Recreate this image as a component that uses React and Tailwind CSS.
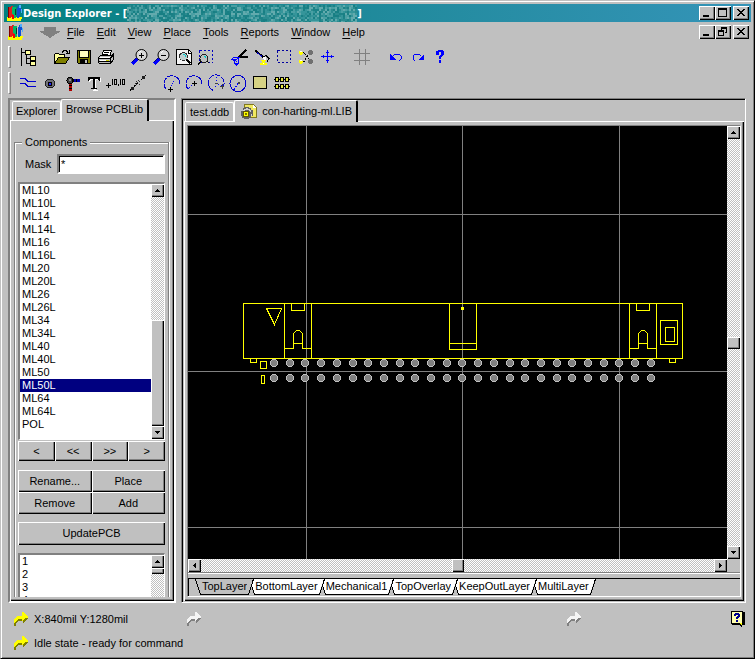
import { useState } from 'react';

const COMPONENTS = ['ML10', 'ML10L', 'ML14', 'ML14L', 'ML16', 'ML16L', 'ML20', 'ML20L', 'ML26', 'ML26L', 'ML34', 'ML34L', 'ML40', 'ML40L', 'ML50', 'ML50L', 'ML64', 'ML64L', 'POL'];
const LAYERS = ['TopLayer', 'BottomLayer', 'Mechanical1', 'TopOverlay', 'KeepOutLayer', 'MultiLayer'];
const MENUS = ['File', 'Edit', 'View', 'Place', 'Tools', 'Reports', 'Window', 'Help'];

const raised = 'bg-[#c0c0c0] shadow-[inset_1px_1px_#fff,inset_-1px_-1px_#000,inset_-2px_-2px_#808080]';
const track = 'bg-[repeating-conic-gradient(#fff_0_25%,#c0c0c0_0_50%)] bg-[length:2px_2px]';

function Svg({ w = 18, h = 18, className = '', children }) {
  return (
    <svg width={w} height={h} viewBox={`0 0 ${w} ${h}`} className={`shrink-0 ${className}`} fill="none" stroke="none" shapeRendering="crispEdges" aria-hidden="true">
      {children}
    </svg>
  );
}

function Lens({ children }) {
  return (
    <Svg>
      <path d="M1 16l5-5" stroke="#00f" strokeWidth="3" />
      <path d="M1 14l4-4" stroke="#000080" />
      <circle cx="10.5" cy="7" r="5.5" fill="#d8d8d8" stroke="#000" shapeRendering="auto" />
      <path d="M7.5 5.5l2-2" stroke="#fff" />
      {children}
    </Svg>
  );
}

const icons = {
  tree: (
    <Svg>
      <path d="M2.5 0v18M2 4.5h4M7.5 7v9M7 10.5h4M7 15.5h4" stroke="#000" />
      <path d="M6.5 2.5h5v4h-5zM11.5 8.5h5v4h-5zM11.5 13.5h5v4h-5z" fill="#ffff9c" stroke="#000" />
    </Svg>
  ),
  open: (
    <Svg>
      <path d="M1.5 15.5v-9l1-1h3l1 1h5v3h-5z" fill="#ffff9c" stroke="#000" />
      <path d="M1.5 15.5l4-6h11l-4 6z" fill="#808000" stroke="#000" />
      <path d="M9 4.5l2-2h2l2 2M16.5 2v4M13 5.5h3" stroke="#000" />
    </Svg>
  ),
  save: (
    <Svg>
      <path d="M2.5 2.5h13v13h-12l-1-1z" fill="#808000" stroke="#000" />
      <path d="M5 3h8v6H5z" fill="#ffffbd" />
      <path d="M4.5 3v6.5h9V3" stroke="#000" />
      <path d="M5 11h8v5H5z" fill="#000" />
      <path d="M10 12h2v3h-2z" fill="#c0c0c0" />
    </Svg>
  ),
  print: (
    <Svg>
      <path d="M4.5 8.5l2-6h8l-2 6z" fill="#fff" stroke="#000" />
      <path d="M7 4.5h5M6 6.5h5" stroke="#000" />
      <path d="M1.5 9.5l2-2h11l2-2v6l-3 4h-11l-1-1z" fill="#c0c0c0" stroke="#000" />
      <path d="M2 10.5h11l3-3M2 13.5h11M13.5 10v5" stroke="#000" />
      <path d="M3 9h10v1H3zM3 12h9v1H3z" fill="#fff" />
      <path d="M9 12h3v1H9z" fill="#cc0" />
    </Svg>
  ),
  zoomIn: <Lens><path d="M8 7.5h5M10.5 5v5" stroke="#000" /></Lens>,
  zoomOut: <Lens><path d="M8 7.5h5" stroke="#000" /></Lens>,
  zoomFit: (
    <Svg>
      <path d="M1.5 1.5h12l3 3v12h-15z" fill="#f4f4f4" stroke="#000" />
      <path d="M13.5 2v3h3" stroke="#000" />
      <circle cx="8.5" cy="8.500" r="4" fill="#c0d0d0" stroke="#303030" />
      <path d="M8 6h2v1h1v2h-1V7H8z" fill="#0cc" />
      <path d="M11.500 11.500l4 4" stroke="#000" strokeWidth="2" />
    </Svg>
  ),
  zoomArea: (
    <Svg>
      <path d="M2.500 2.500h13v12h-13z" stroke="#0000c0" strokeDasharray="2 2" />
      <circle cx="7" cy="10.500" r="4" fill="#c0c0c0" stroke="#202020" />
      <path d="M7 8h2v2H8V9H7z" fill="#0cc" />
      <path d="M1 16.500l3-3M10 13l2 2" stroke="#000" />
    </Svg>
  ),
  cut: (
    <Svg>
      <path d="M15.500 1.500L8 8.500M7 8.500h10" stroke="#000" strokeWidth="2" />
      <path d="M8 9.500H2.500l-2 2h4l3-1zM7.500 10l-4 3v2l2 2 2-2z" stroke="#00f" />
      <path d="M2.500 12v2M5.500 11v5" stroke="#00f" strokeDasharray="1 1" />
    </Svg>
  ),
  paste: (
    <Svg>
      <path d="M2.500 2.500l8 7" stroke="#000" strokeWidth="2" />
      <path d="M4 4.500l5 4" stroke="#0000c0" />
      <path d="M11 8.500l2-1 3 3-2 3" stroke="#000" />
      <path d="M8 12h5v1h-1v2h2v2H7v-2h2v-2H8z" fill="#ff0" />
      <path d="M10 9h3v3h-2v-1h-1zM10 15h1v1h-1z" fill="#fff" />
    </Svg>
  ),
  select: <Svg><path d="M2.500 2.500h13v12h-13z" stroke="#0000a0" strokeDasharray="2 2" /></Svg>,
  nodes: (
    <Svg>
      <path d="M5 4.500h2l3 4-3 5H5M13 5l-3 3.500 3 4" stroke="#000" strokeDasharray="2 1" />
      <path d="M2 3h3v1h1v2H5v1H3V6H2zM2 12h3v1h1v2H5v1H3v-1H2z" fill="#ff0" />
      <path d="M3 3h2v1H3zM3 12h2v1H3z" fill="#fff" />
      <path d="M12 2h3v1h1v3h-1v1h-3V6h-1V3h1zM12 11h3v1h1v3h-1v1h-3v-1h-1v-3h1z" fill="#707070" />
    </Svg>
  ),
  move: (
    <Svg>
      <path d="M2 8.500h13M8.500 2v13M4.500 7v3M12.500 7v3M7 4.500h3M7 12.500h3" stroke="#00f" />
    </Svg>
  ),
  grid: <Svg><path d="M1 5.500h16M1 12.500h16M6.500 1v16M12.500 1v16" stroke="#808080" /></Svg>,
  undo: (
    <Svg>
      <path d="M6 8l2-2h4l2 2v3l-2 2" stroke="#00f" />
      <path d="M3 6v6h6z" fill="#00f" />
    </Svg>
  ),
  redo: (
    <Svg>
      <path d="M12 8l-2-2H6L4 8v3l2 2" stroke="#00f" />
      <path d="M15 6v6H9z" fill="#00f" />
    </Svg>
  ),
  help: (
    <Svg>
      <path d="M5 3h2V2h5v1h1v4h-1v1h-1v1h-1v2H8V8h1V7h1V4H8v3H5zM8 12h2v3H8z" fill="#00f" />
    </Svg>
  ),
  track: <Svg><path d="M1 4.500h5l3 3h8M1 9.500h5l3 3h8" stroke="#0000d0" /></Svg>,
  via: (
    <Svg>
      <circle cx="9" cy="9.500" r="4.500" fill="#707078" stroke="#202020" />
      <path d="M7 8h4v4H7z" fill="#000" />
      <path d="M8 9h2v2H8z" fill="#22f" />
    </Svg>
  ),
  pad: (
    <Svg>
      <path d="M8 5h9v3H8z" fill="#0000b0" />
      <path d="M6 8h3v9H6z" fill="#b00000" />
      <path d="M10.500 5v3M13.500 5v3" stroke="#000" />
      <path d="M6 11.500h3M6 14.500h3" stroke="#000" />
      <circle cx="7" cy="6.500" r="3" fill="#404040" stroke="#000" />
      <path d="M6 5h2v2H6z" fill="#909090" />
    </Svg>
  ),
  text: (
    <Svg>
      <path d="M4 4h12v4h-1l-1-2h-3v10h2v1H8v-1h1V6H6L5 8H4z" fill="#fff" />
      <path d="M3 3h12v4h-1l-1-2h-3v9h2v1H6v-1h2V5H5L4 7H3z" fill="#000" />
    </Svg>
  ),
  coord: (
    <Svg w={20}>
      <path d="M0 11.500h5M2.500 9v5" stroke="#000" />
      <path d="M6.500 5v6M14.500 5v6M12.500 10v2" stroke="#000" />
      <path d="M8.500 5.500h2v5h-2zM16.500 5.500h2v5h-2z" stroke="#000" />
    </Svg>
  ),
  dimension: (
    <Svg>
      <path d="M1 16.500L17 1" stroke="#000" strokeDasharray="2 1" />
      <path d="M13 2h3v3h-3zM2 13h3v3H2z" fill="#202020" />
      <path d="M7 7l4 4M9 6l3 3M6 9l3 3" stroke="#303030" strokeDasharray="1 1" />
    </Svg>
  ),
  arcCenter: (
    <Svg>
      <path d="M3.500 15.500A8 8 0 1 1 17 10" stroke="#0000d0" strokeDasharray="6 1" />
      <path d="M4.500 15.500h5M7.500 13v5" stroke="#000" />
      <path d="M8.500 12l2-5" stroke="#00f" strokeDasharray="1 1" />
    </Svg>
  ),
  arcEdge: (
    <Svg>
      <path d="M3.500 15.500A8 8 0 1 1 17 10" stroke="#0000d0" strokeDasharray="6 1" />
      <path d="M7 9.500h5M9.500 7v5" stroke="#000" />
      <path d="M3 15l4-4" stroke="#00f" strokeDasharray="1 1" />
    </Svg>
  ),
  arcAngle: (
    <Svg>
      <path d="M6.500 16.500A8 8 0 1 1 16 13" stroke="#0000d0" strokeDasharray="6 1" />
      <path d="M9.500 3v7l-3 6M11 10l4 2" stroke="#00f" strokeDasharray="1 2" />
      <path d="M8 9.500h3M13 12.500h4M15.500 10v5" stroke="#404040" />
    </Svg>
  ),
  circle: (
    <Svg>
      <circle cx="9" cy="9.500" r="8" stroke="#0000d0" />
      <path d="M9 9l-4 7" stroke="#00f" strokeDasharray="2 1" />
      <path d="M9 8h2v2H9z" fill="#404040" />
    </Svg>
  ),
  fill: (
    <Svg>
      <path d="M2.500 2.500h13v12h-13z" fill="#d6d284" stroke="#000" />
    </Svg>
  ),
  array: (
    <Svg>
      {[2, 7, 12].map(x => [3, 10].map(y => (
        <path key={`${x}-${y}`} d={`M${x + 0.5} ${y + 0.5}h3v4h-3z`} fill="#e8e840" stroke="#000" />
      )))}
      <path d="M1 5.500h16M1 12.500h16" stroke="#000" strokeDasharray="1 4" />
    </Svg>
  ),
};

const TOOLBARS = [
  [['tree'], ['open', 'save', 'print'], ['zoomIn', 'zoomOut', 'zoomFit', 'zoomArea'], ['cut', 'paste', 'select', 'nodes', 'move'], ['grid'], ['undo', 'redo', 'help']],
  [['track', 'via', 'pad', 'text', 'coord', 'dimension'], ['arcCenter', 'arcEdge', 'arcAngle', 'circle', 'fill', 'array']],
];

function AppIcon() {
  return (
    <Svg w={16} h={16}>
      <path d="M0 12h15l-1 4H0z" fill="#ff0" />
      <path d="M1 2l5-1v11l-5 1z" fill="#e02020" />
      <path d="M1.500 2v11" stroke="#800000" />
      <path d="M5 2h4v11H6V9H5z" fill="#00b868" />
      <path d="M8.500 4v6" stroke="#003c30" />
      <path d="M10 3h1V1h3v5h-1v6l-3 1z" fill="#1050d0" />
      <path d="M12 0h2v3h-2zM14 4h1v4h-1z" fill="#50b0ff" />
      <path d="M5 10h2v4H5z" fill="#f80000" />
    </Svg>
  );
}

function HintArrow({ on }) {
  return (
    <Svg w={15} h={14}>
      <path d="M0 14v-4l3-3h5V4l6 2-5 5V9H4l-2 2v3z" fill={on ? '#808000' : '#808080'} />
      <path d="M0 11V8l3-4h5V0h1l5 5v1h-3L8 9V7H4l-3 3z" fill={on ? '#ff0' : '#f4f4f4'} />
    </Svg>
  );
}

function Noise() {
  const shades = ['#1c8287', '#35959a', '#4a9fa3', '#2b8b90', '#62aaad', '#187f84'];
  const cells = [];
  for (let y = 0; y < 9; y++) {
    for (let x = 0; x < 115; x++) {
      const n = Math.abs(Math.floor(Math.sin(x * 12.9898 + y * 78.233) * 43758.5453)) % 6;
      cells.push(<rect key={`${x}-${y}`} x={x * 2} y={y * 2} width="2" height="2" fill={shades[n]} />);
    }
  }
  return <Svg w={230} h={17}>{cells}</Svg>;
}

function WinButtons({ restore }) {
  const btn = `flex h-[14px] w-4 items-center justify-center ${raised}`;
  return (
    <div className="ml-auto flex">
      <button className={btn} aria-label="Minimize"><Svg w={12} h={10}><path d="M2 7h6v2H2z" fill="#000" /></Svg></button>
      <button className={btn} aria-label={restore ? 'Restore' : 'Maximize'}>
        <Svg w={12} h={10}>
          {restore
            ? <path d="M4.500 3V.500h5v5H8M4 1.500h6M1.500 3.500h5v5h-5zM1 4.500h6" stroke="#000" />
            : <path d="M1.500 .500h8v8h-8zM1 1.500h9" stroke="#000" />}
        </Svg>
      </button>
      <button className={`ml-0.5 ${btn}`} aria-label="Close">
        <Svg w={12} h={10}><path d="M2 1h2v1h1v1h2V2h1V1h2v1H9v1H8v1H7v1h1v1h1v1h1v1H8V7H7V6H5v1H4v1H2V7h1V6h1V5h1V4H4V3H3V2H2z" fill="#000" /></Svg>
      </button>
    </div>
  );
}

const arrows = { up: 'M5 4h1v1h1v1h1v1H3V6h1V5h1z', down: 'M3 4h5v1H7v1H6v1H5V6H4V5H3z', left: 'M4 5h1V4h1V3h1v5H6V7H5V6H4z', right: 'M4 3h1v1h1v1h1v1H6v1H5v1H4z' };

function ScrollButton({ dir }) {
  return (
    <button className={`flex size-[13px] shrink-0 items-center justify-center ${raised}`} aria-label={`Scroll ${dir}`}>
      <Svg w={11} h={11}><path d={arrows[dir]} fill="#000" /></Svg>
    </button>
  );
}

function PushButton({ className = '', children }) {
  return <button className={`flex items-center justify-center ${raised} ${className}`}>{children}</button>;
}

function Tab({ active, className = '', children }) {
  return (
    <button className={`relative flex items-center rounded-t-[2px] border-t border-l border-white whitespace-nowrap ${active ? 'z-10 -mb-px h-[22px] border-r-2 border-r-black bg-[#c0c0c0]' : 'h-[19px] border-r border-r-white'} ${className}`}>
      {children}
    </button>
  );
}

// slanted edge between two layer tabs
function Slant({ left, right }) {
  return (
    <Svg w={8} h={16}>
      {left && <path d="M0 0h6L1 15H0z" fill={left} />}
      {right && <path d="M8 0H6L5 6l2 9h1z" fill={right} />}
      {left && <path d="M0 15.500h1.500L6.500 0" stroke="#000" />}
      {right && <path d={left ? 'M4.500 6l3 9.500H8' : 'M1.500 0l5 15.500H8'} stroke="#000" />}
    </Svg>
  );
}

function Latch({ x }) {
  return <path d={`M${x} 177v55M${x + 27} 177v55M${x + 7} 177v7h13v-7M${x} 222h9v-15l3-3h3l3 3v15h9M${x + 9} 217h9`} />;
}

function Footprint() {
  const pads = Array.from({ length: 25 }, (_, i) => 86 + Math.round(i * 15.7));
  return (
    <svg className="absolute inset-0 h-full w-full" shapeRendering="crispEdges" aria-label="ML50L footprint">
      <path d="M118.500 0v1000M274.500 0v1000M431.500 0v1000M0 88.500h2000M0 245.500h2000M0 401.500h2000" stroke="#808080" />
      {pads.map(x => [237, 252].map(y => (
        <g key={`${x}-${y}`}>
          <circle cx={x} cy={y} r="4" fill="#c0c0c0" />
          <circle cx={x} cy={y} r="3" fill="#808080" />
        </g>
      )))}
      <g transform="translate(.5 .5)" fill="none" stroke="#ff0">
        <path d="M55 177h439v55H55z" />
        <path d="M78 182h15l-7 16z" />
        <path d="M261 177v46h27v-46M261 217h27" />
        <path d="M472 194h17v24h-17zM477 201h9v14h-9z" />
        <path d="M62 232v4h6v-4M481 232v4h6v-4M72 235h6v7h-6zM73 249h3v8h-3z" />
        <Latch x={96} />
        <Latch x={441} />
      </g>
      <path d="M273 181h3v3h-3z" fill="#ff0" />
    </svg>
  );
}

export default function App() {
  const [selected, setSelected] = useState('ML50L');
  const [mask, setMask] = useState('*');
  const [layer, setLayer] = useState('TopLayer');

  return (
    <div className="flex h-screen flex-col overflow-hidden border border-t-[#c0c0c0] border-r-black border-b-black border-l-[#c0c0c0] bg-[#c0c0c0] p-[3px] font-['Liberation_Sans',Arial,sans-serif] text-[11px] leading-[13px] text-black shadow-[inset_1px_1px_#fff,inset_-1px_-1px_#808080]">
      <header className="flex h-[18px] shrink-0 items-center bg-linear-to-r from-[#008080] to-[#3494b8] pr-0.5 pl-[3px] text-white">
        <AppIcon />
        <h1 className="font-['DejaVu_Sans_Condensed','DejaVu_Sans',sans-serif] text-[11px] font-bold whitespace-nowrap">Design Explorer - [</h1>
        <Noise />
        <span className="font-['DejaVu_Sans_Condensed','DejaVu_Sans',sans-serif] font-bold">]</span>
        <WinButtons />
      </header>

      <nav className="flex h-5 shrink-0 items-center pr-0.5 pl-1">
        <AppIcon />
        <Svg w={22} h={11} className="ml-[15px]"><path d="M5 0h12v4h5L11 11 0 4h5z" fill="#808080" /></Svg>
        {MENUS.map(m => (
          <button key={m} className="px-1.5"><span className="underline underline-offset-2">{m[0]}</span>{m.slice(1)}</button>
        ))}
        <WinButtons restore />
      </nav>

      <div className="shrink-0 py-0.5">
        {TOOLBARS.map((groups, i) => (
          <div key={i} className="flex h-[26px] items-center gap-3 pl-1">
            {groups.map((group, j) => (
              <div key={j} className="flex items-center">
                {j === 0 && <span className="mr-1.5 h-[22px] w-[3px] border border-t-white border-r-[#808080] border-b-[#808080] border-l-white" />}
                {group.map(name => (
                  <button key={name} className="flex h-6 w-[22px] items-center justify-center" aria-label={name}>{icons[name]}</button>
                ))}
              </div>
            ))}
          </div>
        ))}
      </div>

      <main className="flex min-h-0 flex-1 gap-[5px] pr-[5px] pl-1">
        <section className="flex w-[168px] shrink-0 flex-col border-2 border-t-[#808080] border-r-white border-b-white border-l-[#808080]">
          <div className="flex h-5 shrink-0 items-end pl-0.5">
            <Tab className="px-[3px]">Explorer</Tab>
            <Tab active className="px-1 pb-0.5">Browse PCBLib</Tab>
          </div>
          <div className="flex min-h-0 flex-1 flex-col border-t border-l border-white px-[3px] pt-[15px] pb-1 shadow-[inset_-1px_-1px_#000,inset_-2px_-2px_#808080]">
            <fieldset className="mr-0.5 min-h-0 min-w-0 flex-1 overflow-hidden border border-b-0 border-[#808080] px-[3px] shadow-[inset_1px_1px_#fff,1px_0_#fff]">
              <legend className="ml-1 bg-[#c0c0c0] px-[3px]">Components</legend>
              <div className="mt-[5px] flex h-5 items-center justify-between pl-[7px]">
                <label htmlFor="mask">Mask</label>
                <input id="mask" value={mask} onChange={e => setMask(e.target.value)} className="h-5 w-[108px] border-2 border-t-[#808080] border-r-white border-b-white border-l-[#808080] bg-white px-0.5 shadow-[inset_1px_1px_#000] outline-none" />
              </div>
              <div className="mt-2 flex h-[258px] border-t-2 border-r border-b border-l-2 border-t-[#808080] border-r-white border-b-white border-l-[#808080] bg-white">
                <ul role="listbox" aria-label="Components" className="flex-1">
                  {COMPONENTS.map(c => (
                    <li key={c} role="option" aria-selected={c === selected} onClick={() => setSelected(c)} className={`pl-0.5 ${c === selected ? 'bg-[#000080] text-white' : ''}`}>{c}</li>
                  ))}
                </ul>
                <div className={`flex w-[13px] flex-col ${track}`}>
                  <ScrollButton dir="up" />
                  <div className={`mt-auto h-[106px] ${raised}`} />
                  <ScrollButton dir="down" />
                </div>
              </div>
              <div className="mt-px grid h-5 grid-cols-4">
                {['<', '<<', '>>', '>'].map(t => <PushButton key={t}>{t}</PushButton>)}
              </div>
              <div className="mt-[9px] grid grid-cols-2">
                {['Rename...', 'Place', 'Remove', 'Add'].map(t => <PushButton key={t} className="h-[22px]">{t}</PushButton>)}
              </div>
              <PushButton className="mt-2 h-[23px] w-full">UpdatePCB</PushButton>
              <div className="mt-2 flex h-[60px] border-t-2 border-r border-l-2 border-t-[#808080] border-r-white border-l-[#808080] bg-white">
                <ul role="listbox" aria-label="Pads" className="flex-1">
                  {[1, 2, 3, 4].map(n => <li key={n} role="option" aria-selected="false" className="pl-0.5">{n}</li>)}
                </ul>
                <div className={`w-[13px] ${track}`}>
                  <ScrollButton dir="up" />
                  <div className={`h-1.5 ${raised}`} />
                </div>
              </div>
            </fieldset>
          </div>
        </section>

        <section className="flex min-w-0 flex-1 flex-col border border-t-[#808080] border-r-white border-b-white border-l-[#808080] pt-px pr-px pb-px pl-0.5 shadow-[inset_1px_1px_#000]">
          <div className="flex h-[21px] shrink-0 items-end pl-px">
            <Tab className="px-1">test.ddb</Tab>
            <Tab active className="gap-[5px] pr-1 pl-1.5">
              <Svg w={16} h={16}>
                <path d="M3.500 .500h9l3 3v10h-12z" fill="#f0e860" stroke="#807820" />
                <path d="M12 1v3h3z" fill="#fff" />
                <path d="M2 4h2V3h4v1h2v2h2v6h-2v2H8v1H3v-1H1v-2H0V7h2z" fill="#606060" />
                <path d="M3 5h2V4h2v1h2v1h1v2H9L7 6H4L3 8H2zM10 10h1v2h-1z" fill="#d0d0d0" />
                <circle cx="5" cy="10" r="3" fill="#ff0" stroke="#605800" />
                <path d="M4 9h2v2H4z" fill="#807800" />
              </Svg>
              con-harting-ml.LIB
            </Tab>
          </div>
          <div className="flex min-h-0 flex-1 flex-col border-t border-l border-white pt-[3px] pr-[3px] pb-1 pl-0.5 shadow-[inset_-1px_-1px_#000,inset_-2px_-2px_#808080]">
            <div className="flex min-h-0 flex-1 flex-col border border-t-[#808080] border-r-white border-b-white border-l-[#808080]">
              <div className="flex min-h-0 flex-1">
                <div className="relative flex-1 overflow-hidden bg-black"><Footprint /></div>
                <div className={`flex w-[13px] flex-col justify-between ${track}`}>
                  <ScrollButton dir="up" />
                  <div className={`h-3 ${raised}`} />
                  <ScrollButton dir="down" />
                </div>
              </div>
              <div className="flex h-[13px] shrink-0 pr-[13px]">
                <div className={`flex flex-1 justify-between ${track}`}>
                  <ScrollButton dir="left" />
                  <div className={`w-3 ${raised}`} />
                  <ScrollButton dir="right" />
                </div>
              </div>
              <div className="mb-1 h-0.5 shrink-0 border-t border-b border-t-[#808080] border-b-white" />
              <div className="flex h-[18px] shrink-0 border-t border-l border-black pl-[5px]">
                <Slant right="#c0c0c0" />
                {LAYERS.map((l, i) => (
                  <div key={l} className="flex h-4">
                    <button onClick={() => setLayer(l)} className={`h-4 border-b border-black ${l === layer ? '' : 'bg-white'}`}>{l}</button>
                    <Slant left={l === layer ? '#c0c0c0' : '#fff'} right={i < LAYERS.length - 1 ? (LAYERS[i + 1] === layer ? '#c0c0c0' : '#fff') : null} />
                  </div>
                ))}
              </div>
            </div>
          </div>
        </section>
      </main>

      <footer className="shrink-0 pt-1 pr-1.5 pl-2.5">
        <div className="grid h-6 grid-cols-[173px_380px_1fr] items-center">
          <p className="flex items-center gap-[5px]"><HintArrow on /> X:840mil Y:1280mil</p>
          <HintArrow />
          <div className="flex items-center justify-between">
            <HintArrow />
            <button aria-label="Help topics">
              <Svg w={14} h={16}>
                <path d="M1 1h13v13h-3v2h-1l-2-2H1z" fill="#000" />
                <path d="M.500 .500h11v12h-11z" fill="#ffffb0" stroke="#000" />
                <path d="M8 12h3v3z" fill="#ff0" />
                <path d="M3 3h1V2h4v1h1v3H8v1H7v1H5V6h1V5h1V4H5v1H3zM5 9h2v2H5z" fill="#000090" />
              </Svg>
            </button>
          </div>
        </div>
        <p className="flex h-6 items-center gap-[5px]"><HintArrow on /> Idle state - ready for command</p>
      </footer>
    </div>
  );
}
